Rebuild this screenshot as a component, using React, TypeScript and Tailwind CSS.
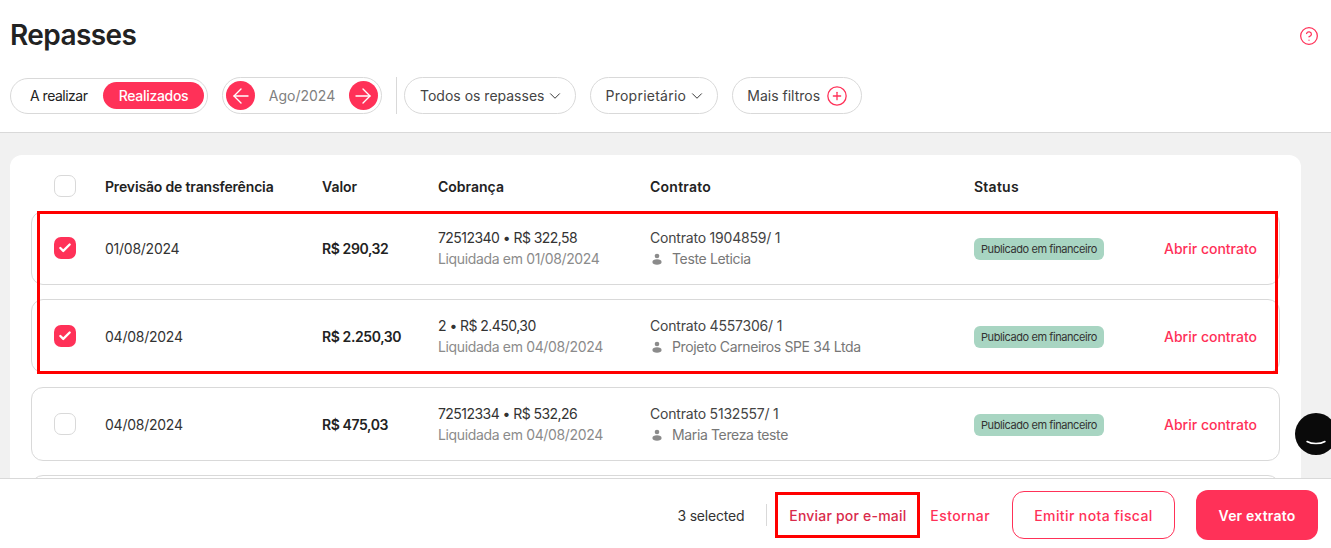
import { ArrowLeft, ArrowRight, Check, ChevronDown, CircleHelp, CirclePlus } from "lucide-react";

const rows = [
  { date: "01/08/2024", value: "R$ 290,32", charge: "72512340 • R$ 322,58", paid: "Liquidada em 01/08/2024", contract: "Contrato 1904859/ 1", owner: "Teste Leticia", checked: true },
  { date: "04/08/2024", value: "R$ 2.250,30", charge: "2 • R$ 2.450,30", paid: "Liquidada em 04/08/2024", contract: "Contrato 4557306/ 1", owner: "Projeto Carneiros SPE 34 Ltda", checked: true },
  { date: "04/08/2024", value: "R$ 475,03", charge: "72512334 • R$ 532,26", paid: "Liquidada em 04/08/2024", contract: "Contrato 5132557/ 1", owner: "Maria Tereza teste", checked: false },
];

function Box({ checked }: { checked?: boolean }) {
  if (checked) {
    return (
      <div className="w-[22px] h-[22px] rounded-[7px] bg-[#ff3158] flex items-center justify-center">
        <Check size={14} strokeWidth={4} className="text-white" />
      </div>
    );
  }
  return <div className="w-[22px] h-[22px] rounded-[7px] border border-[#d9d9d9] bg-white" />;
}

function PersonIcon() {
  return (
    <svg width="12" height="12" viewBox="0 0 12 12" className="fill-[#8b8b8b]">
      <circle cx="6" cy="3" r="2.300" />
      <path d="M1.400 9c0-1.700 1.900-2.700 4.600-2.700s4.600 1 4.600 2.700c0 1.800-1.900 2.800-4.600 2.800S1.400 10.800 1.400 9z" />
    </svg>
  );
}

function FilterPill({ label, wide }: { label: string; wide?: boolean }) {
  return (
    <button className={wide ? "h-[37px] pl-[14px] pr-[11px] rounded-full border border-[#d9d9d9] flex items-center gap-[2px] text-[14px] text-[#444]" : "h-[37px] pl-[15px] pr-[11px] rounded-full border border-[#d9d9d9] flex items-center gap-[2px] text-[14px] text-[#444]"}>
      <span className={wide ? "tracking-[0.25px]" : ""}>{label}</span>
      <ChevronDown size={18} strokeWidth={1.3} className="text-[#333]" />
    </button>
  );
}

export default function App() {
  return (
    <div className="relative h-[548px] overflow-hidden bg-white flex flex-col font-['Inter',sans-serif] text-[#222]">
      <header className="h-[133px] shrink-0 border-b border-[#d9d9d9] px-[10px] pt-[18px]">
        <div className="flex items-center justify-between pr-[2px]">
          <h1 className="text-[28px] leading-[34px] font-semibold tracking-[-0.6px] text-[#222]">Repasses</h1>
          <CircleHelp size={20} strokeWidth={1.5} className="text-[#ff3158] mt-[1px]" />
        </div>
        <div className="flex items-center mt-[25px]">
          <div className="w-[198px] h-[36px] rounded-full border border-[#d9d9d9] flex items-center justify-between pl-[19px] pr-[3px] text-[14px]">
            <span className="tracking-[-0.5px]">A realizar</span>
            <span className="w-[101px] h-[27px] rounded-full bg-[#ff3158] text-white font-medium tracking-[-0.3px] flex items-center justify-center">Realizados</span>
          </div>
          <div className="ml-[14px] w-[160px] h-[37px] rounded-full border border-[#d9d9d9] flex items-center justify-between px-[3px] text-[14px] text-[#808080]">
            <span className="w-[29px] h-[29px] rounded-full bg-[#ff3158] flex items-center justify-center">
              <ArrowLeft size={24} strokeWidth={1.4} className="text-white shrink-0" />
            </span>
            Ago/2024
            <span className="w-[29px] h-[29px] rounded-full bg-[#ff3158] flex items-center justify-center">
              <ArrowRight size={24} strokeWidth={1.4} className="text-white shrink-0" />
            </span>
          </div>
          <div className="w-px h-[37px] bg-[#d9d9d9] ml-[14px] mr-[7px]" />
          <div className="flex items-center gap-[14px]">
            <FilterPill label="Todos os repasses" />
            <FilterPill label="Proprietário" wide />
            <button className="h-[37px] pl-[14px] pr-[13px] rounded-full border border-[#d9d9d9] flex items-center gap-[6px] text-[14px] text-[#444]">
              Mais filtros
              <CirclePlus size={22} strokeWidth={1.4} className="text-[#ff3158]" />
            </button>
          </div>
        </div>
      </header>

      <main className="flex-1 min-h-0 overflow-hidden bg-[#f1f1f1] pl-[10px] pr-[30px] pt-[22px]">
        <div className="bg-white rounded-t-[12px] px-[21px] h-[400px]">
          <div className="h-[56px] pt-[6px] pl-[23px] pr-[22px] grid grid-cols-[51px_217px_116px_212px_324px_1fr] items-center text-[14px] font-semibold">
            <Box />
            <span className="tracking-[-0.16px]">Previsão de transferência</span>
            <span>Valor</span>
            <span>Cobrança</span>
            <span className="tracking-[0.25px]">Contrato</span>
            <span className="tracking-[0.25px]">Status</span>
          </div>
          <div className="flex flex-col gap-[14px]">
            {rows.map((r) => (
              <div key={r.contract} className="h-[74px] shrink-0 rounded-[12px] border border-[#d9d9d9] pl-[22px] pr-[22px] grid grid-cols-[51px_217px_116px_212px_324px_190px_1fr] items-center text-[14px]">
                <Box checked={r.checked} />
                <span className="text-[#333] tracking-[-0.25px]">{r.date}</span>
                <span className="font-semibold tracking-[-0.4px]">{r.value}</span>
                <div className="leading-[21px]">
                  <div className="text-[#333] tracking-[-0.55px]">{r.charge}</div>
                  <div className="text-[#8b8b8b] tracking-[-0.35px]">{r.paid}</div>
                </div>
                <div className="leading-[21px]">
                  <div className="text-[#444] tracking-[-0.2px]">{r.contract}</div>
                  <div className="flex items-center gap-[9px] pl-[1px] text-[#777] tracking-[-0.36px]">
                    <PersonIcon />
                    {r.owner}
                  </div>
                </div>
                <div className="flex mt-[2px]">
                  <span className="flex items-center h-[22px] px-[7px] rounded-[6px] bg-[#a8d5c2] text-[11px] text-[#333] tracking-[-0.42px]">Publicado em financeiro</span>
                </div>
                <span className="text-[#ff3158] font-medium whitespace-nowrap justify-self-end">Abrir contrato</span>
              </div>
            ))}
            <div className="h-[74px] shrink-0 rounded-[12px] border border-[#d9d9d9]" />
          </div>
        </div>
      </main>

      <footer className="h-[70px] shrink-0 pt-[3px] bg-white border-t border-[#d9d9d9] flex items-center justify-end pr-[13px] text-[14px] font-medium">
        <span className="font-normal text-[#333] tracking-[-0.2px]">3 selected</span>
        <div className="w-px h-[22px] bg-[#d9d9d9] ml-[22px] mr-[8px]" />
        <button className="w-[145px] h-[46px] border-[3px] border-[#ff0000] text-[#d92b4b] tracking-[0.2px]">Enviar por e-mail</button>
        <button className="ml-[10px] text-[#ff3158] tracking-[0.4px]">Estornar</button>
        <button className="ml-[22px] w-[163px] h-[48px] rounded-[12px] border border-[#ff3158] text-[#ff3158] tracking-[0.4px]">Emitir nota fiscal</button>
        <button className="ml-[21px] w-[122px] h-[50px] rounded-[12px] bg-[#ff3158] text-white font-semibold tracking-[0.2px]">Ver extrato</button>
      </footer>

      {/* red marker drawn over the first two rows */}
      <div className="absolute left-[37px] top-[211px] w-[1241px] h-[163px] border-[3px] border-[#ff0000] pointer-events-none" />
      {/* chat bubble */}
      <div className="absolute left-[1295px] top-[413px] w-[42px] h-[42px] rounded-full bg-[#0a0a0a] flex items-end justify-center pb-[9px]">
        <svg width="20" height="6" viewBox="0 0 20 6" fill="none">
          <path d="M1 1.500c5 2.800 13 2.800 18 0" stroke="white" strokeWidth="1.500" strokeLinecap="round" />
        </svg>
      </div>
    </div>
  );
}
